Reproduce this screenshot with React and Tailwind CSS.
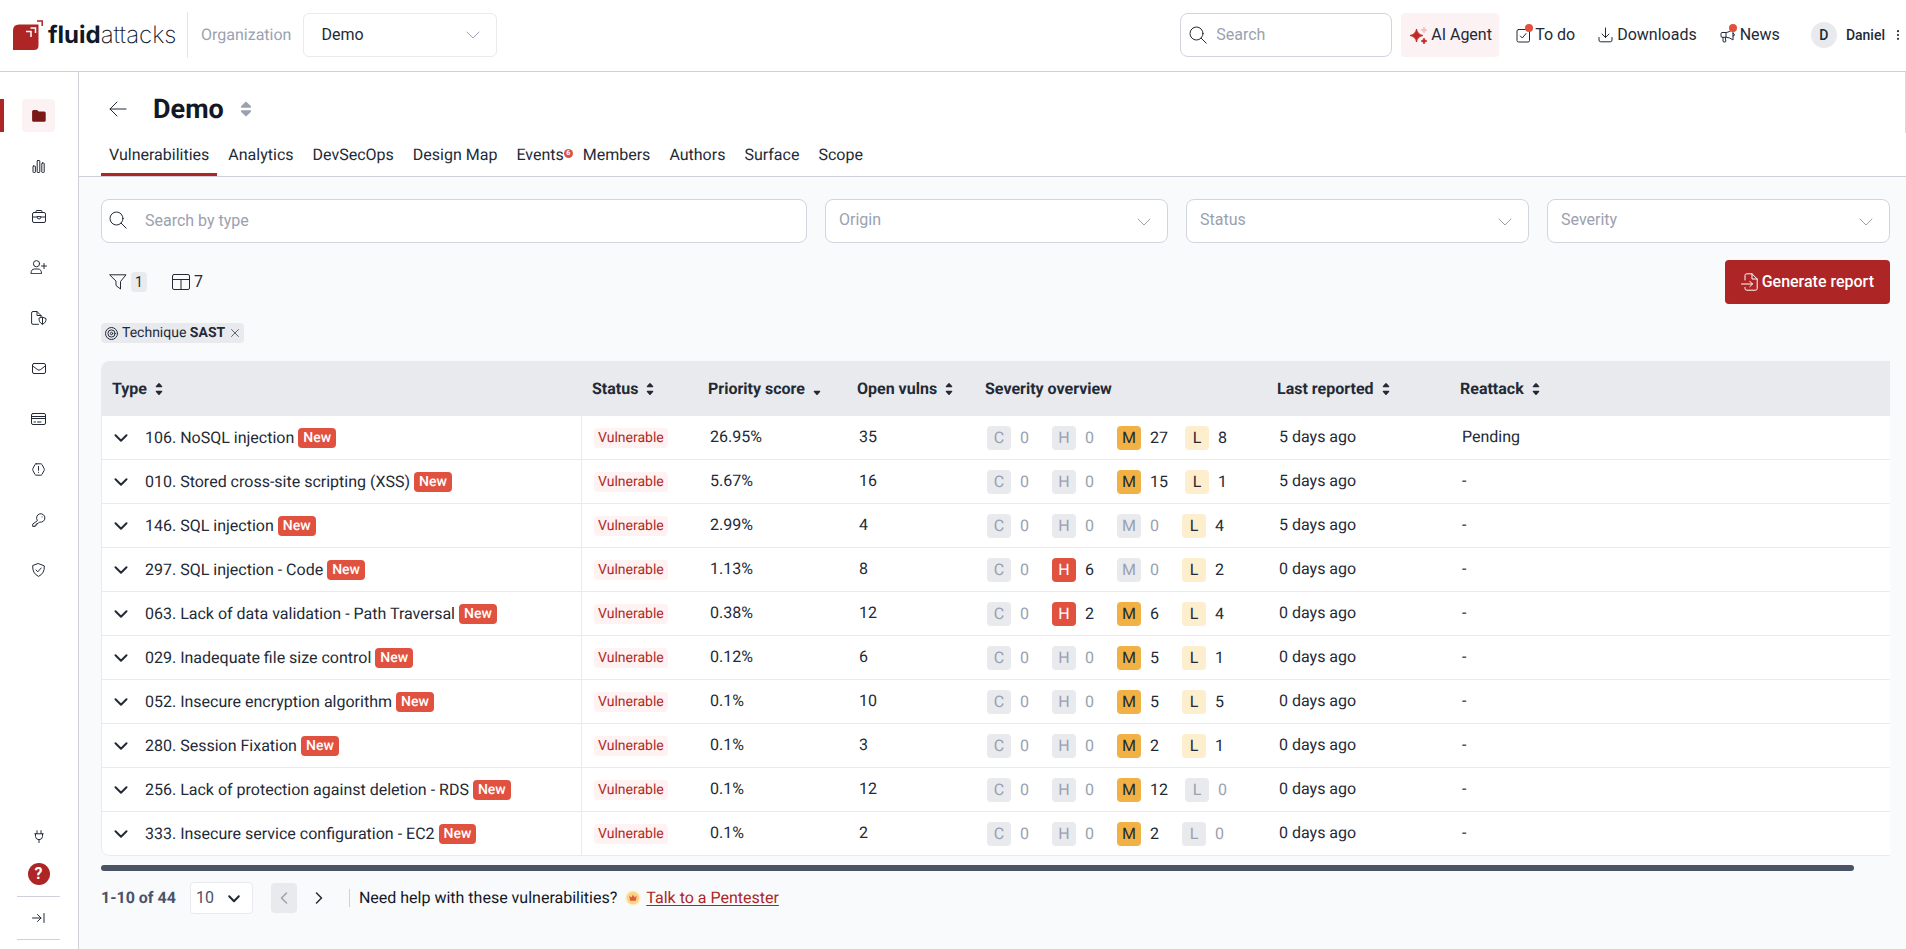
import React from "react";

const Icon = ({ w = 18, h = 18, box, sw = 1, className = "", children }) => (
  <svg
    width={w}
    height={h}
    viewBox={box || `0 0 ${w} ${h}`}
    fill="none"
    stroke="currentColor"
    strokeWidth={sw}
    strokeLinecap="round"
    strokeLinejoin="round"
    className={`shrink-0 ${className}`}
    aria-hidden="true"
  >
    {children}
  </svg>
);

const SearchIcon = ({ className }) => (
  <Icon className={className}>
    <circle cx="7.5" cy="7.5" r="6.5" />
    <path d="M12.2 12.2 17.2 17.2" />
  </Icon>
);

const ThinChevron = ({ className }) => (
  <Icon w={14} h={8} className={className}>
    <path d="M1 1l6 6 6-6" />
  </Icon>
);

const ArrowUpDown = ({ up = true }) => (
  <svg width="8" height="14" viewBox="0 0 8 14" fill="currentColor" className="shrink-0" aria-hidden="true">
    {up && <path d="M4 1 Q4.4 1 4.8 1.5L7.2 4.2Q7.6 5.2 6.6 5.2H1.4Q.4 5.2 .8 4.2L3.2 1.5Q3.6 1 4 1Z" />}
    <path d="M4 13 Q4.4 13 4.8 12.5L7.2 9.8Q7.6 8.8 6.6 8.8H1.4Q.4 8.8 .8 9.8L3.2 12.5Q3.6 13 4 13Z" />
  </svg>
);

const Logo = () => (
  <a href="#home" aria-label="Fluid Attacks home" className="flex w-[166px] items-center gap-1">
    <svg width="31" height="31" viewBox="0 0 31 31" className="shrink-0" aria-hidden="true">
      <path d="M6 4.5H25.500V25.500Q25.500 30 21 30H0V10.500Q0 4.500 6 4.500Z" fill="#ad2524" />
      <path d="M17.500 8H22.500V13M13 11.500H18V17" fill="none" stroke="#fff" strokeWidth="1.500" />
      <path d="M24 1H29.200V6" fill="none" stroke="#ad2524" strokeWidth="1.500" />
    </svg>
    <span className="font-['Inter',sans-serif] text-2xl leading-8 text-[#121826]">
      <b className="font-bold">fluid</b>
      <span className="font-extralight">attacks</span>
    </span>
  </a>
);

const navItems = [
  {
    label: "Groups",
    active: true,
    icon: (
      <svg width="14" height="12" viewBox="0 0 14 12" fill="#7a1717" aria-hidden="true">
        <path d="M1.600 0H5L6.800 1.500H12.200Q13.700 1.500 13.700 3V10.200Q13.700 11.700 12.200 11.700H1.600Q.1 11.700 .1 10.200V1.500Q.1 0 1.600 0Z" />
      </svg>
    ),
  },
  {
    label: "Analytics",
    icon: (
      <Icon w={13} h={13}>
        <rect x="1" y="6" width="2.400" height="6.500" rx="0.600" />
        <rect x="5.200" y="0.500" width="2.600" height="12" rx="0.600" />
        <rect x="9.800" y="3" width="2.400" height="9.500" rx="0.600" />
      </Icon>
    ),
  },
  {
    label: "Portfolio",
    icon: (
      <Icon w={14} h={13}>
        <rect x="0.500" y="2.500" width="13" height="10" rx="1.500" />
        <path d="M4 2.500V1.500Q4 .5 5 .5H9Q10 .5 10 1.500V2.500M.5 7H4.500M9.500 7H13.500M5 7Q5 9 7 9T9 7Z" />
      </Icon>
    ),
  },
  {
    label: "Members",
    icon: (
      <Icon w={17} h={14}>
        <circle cx="6.500" cy="3.700" r="3.100" />
        <path d="M1 13.300Q1 9 4.500 9H8Q11.500 9 11.500 13.300ZM11.500 6H16.500M14 3.500V8.500" />
      </Icon>
    ),
  },
  {
    label: "Policies",
    icon: (
      <Icon w={16} h={14}>
        <path d="M7.500 13.300H2Q.6 13.300 .6 12V2Q.6 .5 2 .5H6L10 4.500V6M6 .5V4.500H10" />
        <path d="M11.500 6.200 15 7.500Q15.400 11.500 11.500 13.300 7.700 11.500 8 7.500ZM11.500 6.500V13" />
      </Icon>
    ),
  },
  {
    label: "Inbox",
    icon: (
      <Icon w={14} h={11}>
        <rect x="0.500" y="0.500" width="13" height="10" rx="1.500" />
        <path d="M.7 3 5.800 6.800Q7 7.500 8.200 6.800L13.300 3" />
      </Icon>
    ),
  },
  {
    label: "Billing",
    icon: (
      <Icon w={15} h={12}>
        <rect x="0.500" y="0.500" width="14" height="11" rx="1.500" />
        <path d="M.5 3.500H14.500M.5 5.500H14.500M3 9H4.500M6.500 9H10" />
      </Icon>
    ),
  },
  {
    label: "Outside",
    icon: (
      <Icon w={13} h={13}>
        <path d="M4.200 .8H8.800Q9.500 .8 10 1.500L12.100 5.500Q12.500 6.500 12.100 7.500L10 11.500Q9.500 12.200 8.800 12.200H4.200Q3.500 12.200 3 11.500L.9 7.500Q.5 6.500 .9 5.500L3 1.500Q3.500 .8 4.200 .8ZM6.500 3.500V7.300M6.500 9.200V9.400" />
      </Icon>
    ),
  },
  {
    label: "Credentials",
    icon: (
      <Icon w={14} h={14}>
        <path d="M5.200 7.300A4.200 4.200 0 1 1 7.500 9L6 10.500H4.800V12H3.200V13.400H.7V11.500Z" />
        <path d="M10 3.900V4" />
      </Icon>
    ),
  },
  {
    label: "Compliance",
    icon: (
      <Icon w={13} h={14}>
        <path d="M6.500 .6 12.300 2.900Q12.800 10.400 6.500 13.400 .2 10.400 .7 2.900ZM4 7 5.800 8.800 9.200 5" />
      </Icon>
    ),
  },
];

const tabs = ["Vulnerabilities", "Analytics", "DevSecOps", "Design Map", "Events", "Members", "Authors", "Surface", "Scope"];

const rows = [
  ["106. NoSQL injection", "26.95%", 35, [0, 0, 27, 8], "5 days ago", "Pending"],
  ["010. Stored cross-site scripting (XSS)", "5.67%", 16, [0, 0, 15, 1], "5 days ago", "-"],
  ["146. SQL injection", "2.99%", 4, [0, 0, 0, 4], "5 days ago", "-"],
  ["297. SQL injection - Code", "1.13%", 8, [0, 6, 0, 2], "0 days ago", "-"],
  ["063. Lack of data validation - Path Traversal", "0.38%", 12, [0, 2, 6, 4], "0 days ago", "-"],
  ["029. Inadequate file size control", "0.12%", 6, [0, 0, 5, 1], "0 days ago", "-"],
  ["052. Insecure encryption algorithm", "0.1%", 10, [0, 0, 5, 5], "0 days ago", "-"],
  ["280. Session Fixation", "0.1%", 3, [0, 0, 2, 1], "0 days ago", "-"],
  ["256. Lack of protection against deletion - RDS", "0.1%", 12, [0, 0, 12, 0], "0 days ago", "-"],
  ["333. Insecure service configuration - EC2", "0.1%", 2, [0, 0, 2, 0], "0 days ago", "-"],
];

const columns = [
  ["Type", "both", "w-[480px]"],
  ["Status", "both", "w-[116px]"],
  ["Priority score", "down", "w-[149px]"],
  ["Open vulns", "both", "w-[128px]"],
  ["Severity overview", null, "w-[292px]"],
  ["Last reported", "both", "w-[183px]"],
  ["Reattack", "both", ""],
];

const levels = [
  ["C", "bg-[#7a1717] text-white"],
  ["H", "bg-[#e0513f] text-white"],
  ["M", "bg-[#f2b144] text-[#232a36]"],
  ["L", "bg-[#fdefcd] text-[#232a36]"],
];

const Severity = ({ counts }) => (
  <div className="flex items-center gap-[17px]">
    {levels.map(([letter, tone], i) => (
      <span key={letter} className={`flex items-center gap-[9px] ${counts[i] ? "" : "text-[#9aa1b0]"}`}>
        <span
          className={`flex size-6 items-center justify-center rounded ${counts[i] ? tone : "bg-[#e9eaee] text-[#9aa1b0]"}`}
        >
          {letter}
        </span>
        <span className="min-w-[15px]">{counts[i]}</span>
      </span>
    ))}
  </div>
);

const FilterSelect = ({ label }) => (
  <div className="relative min-w-0 flex-1">
    <select
      aria-label={label}
      className="h-11 w-full appearance-none rounded-lg border border-[#d2d5dd] bg-white px-[13px] pb-0.5 text-[#9aa1b0]"
    >
      <option>{label}</option>
    </select>
    <ThinChevron className="pointer-events-none absolute top-[19px] right-[17px] text-[#9aa1b0]" />
  </div>
);

const TopLink = ({ icon, dot, children }) => (
  <button type="button" className="relative flex items-center gap-1">
    {icon}
    {dot && <span className="absolute -top-px left-[9px] size-2 rounded-full bg-[#e0513f]" />}
    {children}
  </button>
);

const Header = () => (
  <header className="flex h-[72px] items-center border-b border-[#ced1da] bg-white pb-[14px] pl-[13px] pr-[6px] pt-[13px]">
    <Logo />
    <div className="ml-2 h-[46px] w-px bg-[#e4e6eb]" />
    <label htmlFor="organization" className="ml-[13px] text-[#9aa1b0]">
      Organization
    </label>
    <div className="relative ml-3 w-[194px]">
      <select
        id="organization"
        className="h-11 w-full appearance-none rounded-md border border-[#e9eaee] bg-white px-[17px] text-[#232a36]"
      >
        <option>Demo</option>
      </select>
      <ThinChevron className="pointer-events-none absolute top-[18px] right-[17px] text-[#9aa1b0]" />
    </div>
    <div className="relative ml-auto w-[212px]">
      <SearchIcon className="absolute left-[9px] top-[13px] text-[#232a36]" />
      <input
        aria-label="Search"
        placeholder="Search"
        className="h-11 w-full rounded-lg border border-[#d2d5dd] pb-0.5 pl-[35px] pr-3 placeholder:text-[#9aa1b0]"
      />
    </div>
    <button type="button" className="ml-[9px] flex h-11 w-[98px] items-center gap-1 rounded bg-[#fcf1f3] pl-[9px]">
      <svg width="17" height="17" viewBox="0 0 17 17" className="shrink-0" aria-hidden="true">
        <path d="M6.500 2Q7.200 7.300 13 8.500 7.200 9.700 6.500 15 5.800 9.700 0 8.500 5.800 7.300 6.500 2Z" fill="#bf2a26" stroke="#bf2a26" strokeWidth="0.900" />
        <path d="M14 11Q14.300 13.500 17 14 14.300 14.500 14 17 13.700 14.500 11 14 13.700 13.500 14 11Z" fill="#bf2a26" stroke="#bf2a26" strokeWidth="0.700" />
        <path d="M14 0Q14.300 2.500 17 3 14.300 3.500 14 6 13.700 3.500 11 3 13.700 2.500 14 0Z" fill="#f0c1c0" stroke="#f0c1c0" strokeWidth="0.700" />
      </svg>
      AI Agent
    </button>
    <div className="ml-[17px] flex items-center gap-[23px]">
      <TopLink
        dot
        icon={
          <Icon w={15} h={15}>
            <rect x="1" y="1.500" width="12.500" height="12.500" rx="1.500" />
            <path d="M4.300 8 6.300 10 10 5.500" />
          </Icon>
        }
      >
        To do
      </TopLink>
      <TopLink
        icon={
          <Icon w={15} h={16}>
            <path d="M7.500 1V10.500M4 7 7.500 10.500 11 7M1 10.500V13Q1 14.800 2.800 14.800H12.200Q14 14.800 14 13V10.500" />
          </Icon>
        }
      >
        Downloads
      </TopLink>
      <TopLink
        dot
        icon={
          <Icon w={16} h={16}>
            <path d="M1 6.500Q1 5.500 2 5.500H6.500Q10 5 13 2V13Q10 10.500 6.500 10.300H2Q1 10.300 1 9.300ZM6 5.500V10.300M3 10.300V14Q3 15 4 15H5Q6 15 5.800 14L5.300 10.300M13 6.500Q14.500 6.500 14.500 7.800T13 9" />
          </Icon>
        }
      >
        News
      </TopLink>
    </div>
    <button type="button" className="ml-[31px] flex items-center text-sm font-medium" aria-label="User menu">
      <span className="flex size-[26px] items-center justify-center rounded-full bg-[#e9eaee]">D</span>
      <span className="ml-[9px] mr-[11px]">Daniel</span>
      <svg width="4" height="10" viewBox="0 0 4 10" fill="currentColor" aria-hidden="true">
        <circle cx="2" cy="1.200" r="1.100" />
        <circle cx="2" cy="5" r="1.100" />
        <circle cx="2" cy="8.800" r="1.100" />
      </svg>
    </button>
  </header>
);

const Sidebar = () => (
  <nav aria-label="Main" className="flex w-[79px] shrink-0 flex-col border-r border-[#ced1da] bg-white pt-[27px]">
    <ul className="flex h-[488px] flex-col justify-between">
      {navItems.map((item) => (
        <li
          key={item.label}
          className={`flex h-[33px] border-l-4 pl-[18px] ${item.active ? "border-[#ad2524]" : "border-transparent"}`}
        >
          <a
            href={`#${item.label.toLowerCase()}`}
            aria-label={item.label}
            className={`flex size-[33px] items-center justify-center rounded ${item.active ? "bg-[#fcf1f3]" : ""}`}
          >
            {item.icon}
          </a>
        </li>
      ))}
    </ul>
    <div className="mt-auto flex w-[77px] flex-col items-center pb-[10px]">
      <button type="button" aria-label="Integrations">
        <Icon w={10} h={13}>
          <path d="M3 .7V3.500M7 .7V3.500M.7 3.800H9.300M1.500 4V6.500Q1.700 9.500 5 9.700 8.300 9.500 8.500 6.500V4M5 9.700V12.500" />
        </Icon>
      </button>
      <button
        type="button"
        aria-label="Help"
        className="mt-5 flex size-[22px] items-center justify-center rounded-full bg-[#ad2524] text-base font-bold text-white"
      >
        ?
      </button>
      <div className="mt-[11px] h-px w-[43px] bg-[#ced1da]" />
      <button type="button" aria-label="Expand menu" className="flex h-[42px] items-center">
        <Icon w={13} h={10}>
          <path d="M.5 5H9M5.500 1.500 9 5 5.500 8.500M12 .5V9.500" />
        </Icon>
      </button>
      <div className="h-px w-[43px] bg-[#ced1da]" />
    </div>
  </nav>
);

const Cell = ({ children, className = "" }) => (
  <td className={`h-11 border-b border-[#e9eaee] p-0 pl-3 ${className}`}>{children}</td>
);

const VulnTable = () => (
  <div className="mt-[18px] overflow-hidden rounded-l-lg border-l border-[#e9eaee]">
    <table className="w-full table-fixed border-separate border-spacing-0 bg-white">
      <thead>
        <tr className="h-[55px] bg-[#e9eaee] text-left">
          {columns.map(([name, sort, width]) => (
            <th key={name} scope="col" className={`p-0 pl-[10px] font-bold ${width}`}>
              <span className="flex items-center gap-2">
                {name}
                {sort && <ArrowUpDown up={sort === "both"} />}
              </span>
            </th>
          ))}
        </tr>
      </thead>
      <tbody>
        {rows.map(([name, score, open, counts, reported, reattack], i) => (
          <tr key={name}>
            <Cell className={`border-r ${i === rows.length - 1 ? "rounded-bl-lg" : ""}`}>
              <div className="flex items-center">
                <button type="button" aria-label={`Expand ${name}`} className="mr-[17px] flex h-5 items-center">
                  <Icon w={14} h={8} sw={2}>
                    <path d="M1.500 1.300 7 6.700 12.500 1.300" />
                  </Icon>
                </button>
                {name}
                <span className="ml-1 rounded bg-[#e0513f] px-[5px] text-sm font-medium leading-5 text-white">New</span>
              </div>
            </Cell>
            <Cell>
              <span className="rounded bg-[#fef2f2] px-1 py-0.5 text-sm text-[#b02a26]">Vulnerable</span>
            </Cell>
            <Cell className="pb-0.5">{score}</Cell>
            <Cell className="pb-0.5">{open}</Cell>
            <Cell>
              <Severity counts={counts} />
            </Cell>
            <Cell className="pb-0.5">{reported}</Cell>
            <Cell className="pb-0.5">{reattack}</Cell>
          </tr>
        ))}
      </tbody>
    </table>
  </div>
);

const Pagination = () => (
  <footer className="mt-[11px] flex items-center pb-9">
    <span className="font-bold text-[#4a5366]">1-10 of 44</span>
    <div className="relative ml-[14px] w-[63px]">
      <select
        aria-label="Rows per page"
        className="h-8 w-full appearance-none rounded border border-[#e9eaee] bg-white px-[5px] text-[#4a5366]"
      >
        <option>10</option>
      </select>
      <Icon w={12} h={8} sw={2} className="pointer-events-none absolute right-[13px] top-[13px] text-[#232a36]">
        <path d="M1.200 1.300 6 6.300 10.800 1.300" />
      </Icon>
    </div>
    <button
      type="button"
      disabled
      aria-label="Previous page"
      className="ml-[18px] flex h-[30px] w-[26px] items-center justify-center rounded bg-[#e9eaee] text-[#9aa1b0]"
    >
      <Icon w={8} h={12} sw={1.500}>
        <path d="M6.500 1 1.500 6 6.500 11" />
      </Icon>
    </button>
    <button type="button" aria-label="Next page" className="ml-[9px] flex h-[30px] w-[26px] items-center justify-center">
      <Icon w={8} h={12} sw={1.500}>
        <path d="M1.500 1 6.500 6 1.500 11" />
      </Icon>
    </button>
    <div className="ml-[17px] h-[18px] w-px bg-[#ced1da]" />
    <span className="ml-[9px] text-[#121826]">Need help with these vulnerabilities?</span>
    <a href="#pentester" className="ml-2 flex items-center gap-[5px] text-[#ad2524]">
      <svg width="16" height="16" viewBox="0 0 16 16" className="shrink-0" aria-hidden="true">
        <circle cx="8" cy="8" r="7.800" fill="#fdefcd" />
        <circle cx="8" cy="8" r="6.300" fill="#f8d488" />
        <path d="M4.300 5.800 6.300 7.500 8 4.800 9.700 7.500 11.700 5.800 10.900 10.800H5.100Z" fill="#dd5a3c" />
      </svg>
      <span className="underline underline-offset-2">Talk to a Pentester</span>
    </a>
  </footer>
);

export default function App() {
  return (
    <div className="flex min-h-screen flex-col bg-[#f9fafc] font-['Roboto',sans-serif] text-base leading-5 text-[#232a36] [text-rendering:geometricPrecision]">
      <Header />
      <div className="flex flex-1">
        <Sidebar />
        <main className="min-w-0 flex-1">
          <div className="relative border-b border-[#ced1da] bg-white pl-[22px]">
            <span className="absolute right-0 top-0 h-[61px] w-px bg-[#d9dbe1]" />
            <div className="flex h-[73px] items-center pl-2">
              <button type="button" aria-label="Back">
                <Icon w={18} h={16}>
                  <path d="M17 8H1M8 1 1 8 8 15" />
                </Icon>
              </button>
              <h1 className="ml-[26px] text-[27px] font-bold leading-9 text-[#121826]">Demo</h1>
              <button type="button" aria-label="Switch group" className="ml-4 text-[#9aa1b0]">
                <svg width="12" height="16" viewBox="0 0 12 16" fill="currentColor" aria-hidden="true">
                  <path d="M6 .5 10.800 5Q11.500 6.700 10.500 6.700H1.500Q.5 6.700 1.200 5ZM6 15.500 10.800 11Q11.500 9.300 10.500 9.300H1.500Q.5 9.300 1.200 11Z" />
                </svg>
              </button>
            </div>
            <nav aria-label="Group" className="flex gap-[3px]">
              {tabs.map((tab, i) => (
                <a
                  key={tab}
                  href={`#${tab.toLowerCase().replace(" ", "-")}`}
                  className={`relative border-b-[3px] px-2 pb-2 ${i === 0 ? "border-[#ad2524]" : "border-transparent"}`}
                >
                  {tab}
                  {tab === "Events" && (
                    <span className="absolute -right-px top-1 flex size-[9px] items-center justify-center rounded-full bg-[#e0513f] text-[7px] font-bold leading-none text-white">
                      6
                    </span>
                  )}
                </a>
              ))}
            </nav>
          </div>
          <div className="pl-[22px] pr-4 pt-[22px]">
            <div className="flex gap-[18px]">
              <div className="relative w-[706px]">
                <SearchIcon className="absolute left-2 top-3" />
                <input
                  aria-label="Search by type"
                  placeholder="Search by type"
                  className="h-11 w-full rounded-lg border border-[#d2d5dd] bg-white pb-px pl-[43px] pr-3 placeholder:text-[#9aa1b0]"
                />
              </div>
              <FilterSelect label="Origin" />
              <FilterSelect label="Status" />
              <FilterSelect label="Severity" />
            </div>
            <div className="mt-[17px] flex items-center pl-2">
              <button type="button" aria-label="Filters" className="flex items-center gap-1">
                <Icon w={18} h={16}>
                  <path d="M1 .8H17L11.500 7.500V15L7 11.500V7.500Z" />
                </Icon>
                <span className="flex h-5 w-4 items-center justify-center rounded bg-[#e9eaee] text-sm">1</span>
              </button>
              <button type="button" aria-label="Columns" className="ml-[25px] flex items-center gap-1">
                <Icon w={18} h={16}>
                  <rect x="0.500" y="0.500" width="17" height="15" rx="1.500" />
                  <path d="M.5 5.500H17.500M9 5.500V15.500" />
                </Icon>
                7
              </button>
              <button
                type="button"
                className="ml-auto flex h-11 items-center gap-1 rounded bg-[#ad2524] px-4 font-medium text-white"
              >
                <Icon w={17} h={18}>
                  <path d="M4 7V2.500Q4 .8 5.700 .8H11L16.200 6V15.500Q16.200 17.200 14.500 17.200H5.700Q4 17.200 4 15.500V14.500M11 .8V6H16.200M.5 11H11.500M8.800 8.300 11.500 11 8.800 13.700" />
                </Icon>
                Generate report
              </button>
            </div>
            <div className="mt-[19px] flex">
              <span className="flex h-5 items-center rounded bg-[#e9eaee] px-1 text-sm">
                <Icon w={13} h={13}>
                  <circle cx="6.500" cy="6.500" r="6" />
                  <circle cx="6.500" cy="6.500" r="3.600" />
                  <circle cx="6.500" cy="6.500" r="1.200" />
                </Icon>
                <span className="ml-1">
                  Technique <b>SAST</b>
                </span>
                <button type="button" aria-label="Remove filter" className="ml-[6px] mr-px text-[#5d6575]">
                  <Icon w={8} h={8}>
                    <path d="M.5 .5 7.500 7.500M7.500 .5 .5 7.500" />
                  </Icon>
                </button>
              </span>
            </div>
            <VulnTable />
            <div className="mt-[9px] mr-9 h-1.5 rounded-full bg-[#4a5366]" />
            <Pagination />
          </div>
        </main>
      </div>
    </div>
  );
}
